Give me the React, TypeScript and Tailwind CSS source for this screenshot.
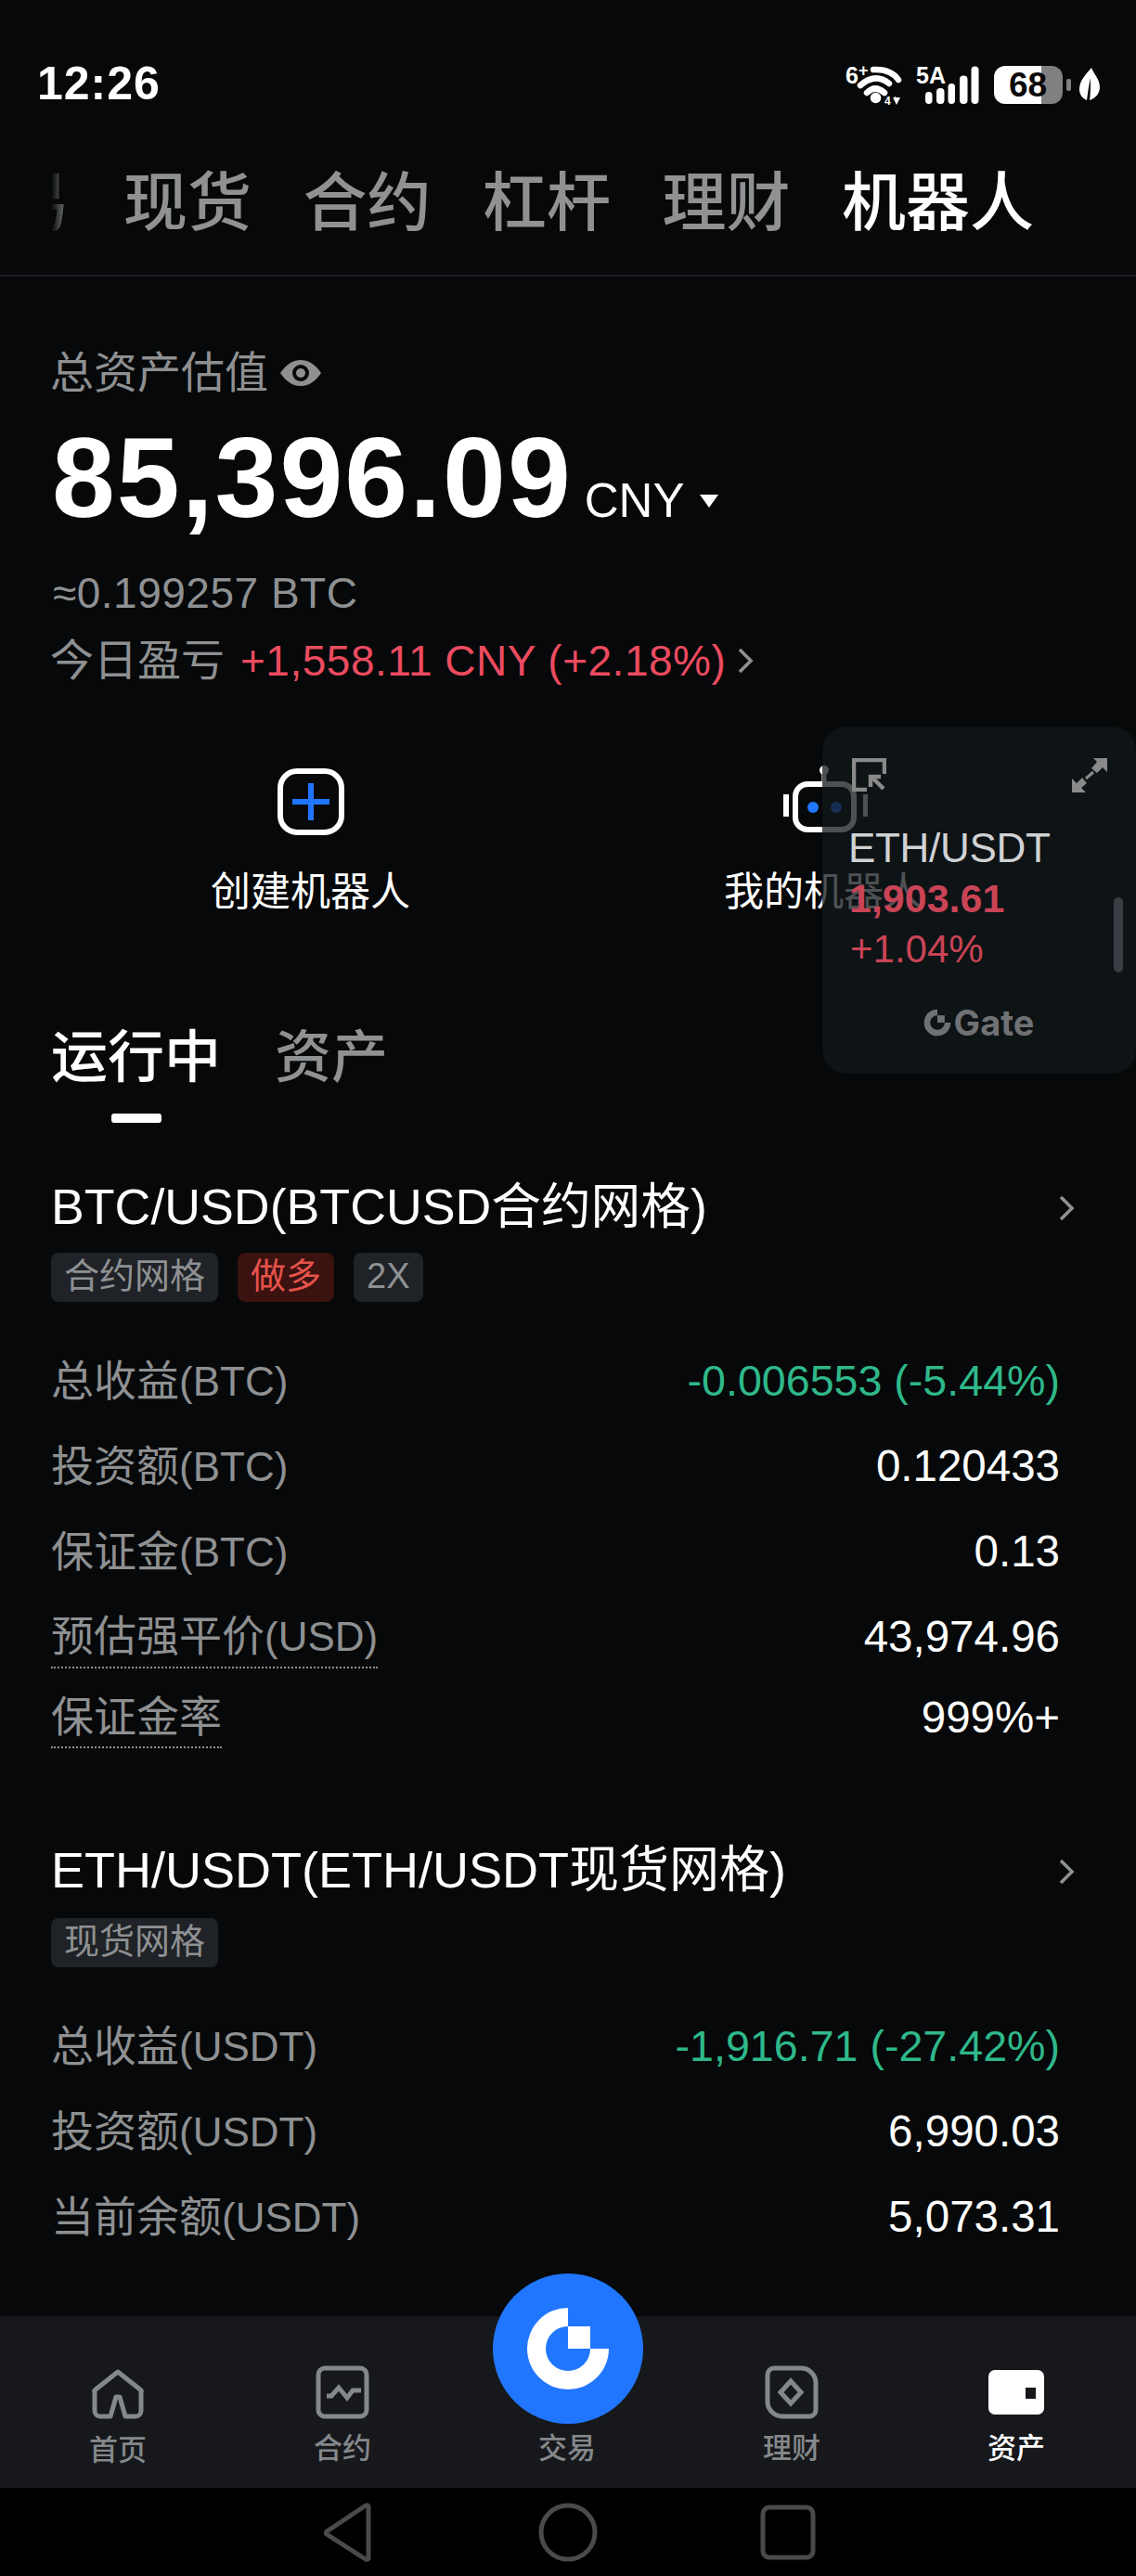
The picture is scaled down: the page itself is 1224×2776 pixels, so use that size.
import React from "react";

const SANS = "font-['Liberation_Sans','Noto_Sans_CJK_SC',sans-serif]";

function StatusIcons() {
  return (
    <svg width="278" height="46" viewBox="0 0 278 46" className="block overflow-visible">
      <g fill="#fff" fontFamily="'Liberation Sans',sans-serif" fontWeight="700">
        <text x="1" y="23" fontSize="25">6</text>
        <text x="15" y="15" fontSize="18">+</text>
        <text x="77" y="23" fontSize="25">5A</text>
        <text x="43" y="46" fontSize="12">4</text>
      </g>
      <g fill="none" stroke="#fff" strokeWidth="6.5" strokeLinecap="round">
        <path d="M31 8 Q 50 7 58 19" />
        <path d="M17 25 Q 33 11 48 23" />
        <path d="M24 33 Q 33 24 43 33" />
      </g>
      <circle cx="33.5" cy="38.5" r="5.8" fill="#fff" />
      <path d="M52 38h2v-1h1v1h5l-4 8z" fill="#fff" />
      <g fill="#fff">
        <rect x="87" y="32" width="7.5" height="13" rx="3.7" />
        <rect x="99" y="28" width="8.5" height="17" rx="4" />
        <rect x="111.5" y="23" width="7.5" height="22" rx="3.7" />
        <rect x="124" y="14.5" width="8.5" height="30.5" rx="4" />
        <rect x="136.5" y="4.5" width="8" height="40.5" rx="4" />
      </g>
      <path d="M212 4h-39a12 12 0 0 0-12 12v17a12 12 0 0 0 12 12h39z" fill="#fff" />
      <path d="M212 4h11a12 12 0 0 1 12 12v17a12 12 0 0 1-12 12h-11z" fill="#808080" />
      <text x="177" y="36.5" fontSize="37" fontWeight="700" fontFamily="'Liberation Sans',sans-serif" fill="#0a0a0a">68</text>
      <rect x="239" y="18" width="5" height="13" rx="2" fill="#808080" />
      <path d="M266 6C260 13 253 20 253 29c0 7 4 10 8 12 1-7 2-16 4-24 0 9 0 18-1 24 6-2 11-7 11-14 0-9-7-15-9-21z" fill="#fff" />
    </svg>
  );
}

function Tab({ children, active }: { children: React.ReactNode; active?: boolean }) {
  return (
    <span className={`text-[69px] leading-[80px] font-medium ${active ? "text-white" : "text-[#8f9193]"}`}>{children}</span>
  );
}

function Chevron({ className }: { className: string }) {
  return (
    <svg width="20" height="30" viewBox="0 0 20 30" className={className} fill="none" stroke="currentColor" strokeWidth="3.6">
      <path d="M3 3l12 12L3 27" />
    </svg>
  );
}

function Row({ label, unit, value, green, dotted, h = "h-[92px]" }: { label: string; unit?: string; value: string; green?: boolean; dotted?: boolean; h?: string }) {
  return (
    <div className={`flex items-center justify-between ${h}`}>
      <span className={`text-[46px] leading-[64px] text-[#8e9092] ${dotted ? "border-b-2 border-dotted border-[#8e9092]" : ""}`}>
        {label}
        {unit && <span className="text-[44px]">{unit}</span>}
      </span>
      <span className={`leading-[64px] ${green ? "text-[46.6px] text-[#2fb88a]" : "text-[47.5px] text-white"}`}>{value}</span>
    </div>
  );
}

function Tag({ children, red }: { children: React.ReactNode; red?: boolean }) {
  return (
    <span className={`h-[53px] px-[14px] pb-[3px] rounded-[8px] flex items-center text-[38px] leading-none ${red ? "bg-[#3a1210] text-[#e5534b]" : "bg-[#1f2226] text-[#8e9092]"}`}>
      {children}
    </span>
  );
}

function GateG({ size, color }: { size: number; color: string }) {
  return (
    <svg width={size} height={size} viewBox="-46 -46 92 92" className="block">
      <path d="M0-44A44 44 0 1 0 44 0H24A24 24 0 1 1 0-24Z" fill={color} />
      <rect x="0" y="-24" width="24" height="24" fill={color} />
    </svg>
  );
}

function NavItem({ icon, label, active, labelClass = "" }: { icon: React.ReactNode; label: string; active?: boolean; labelClass?: string }) {
  return (
    <div className="flex flex-col items-center">
      <div className="h-[60px] flex items-center justify-center">{icon}</div>
      <span className={`text-[31px] leading-[36px] font-medium mt-[13px] ${active ? "text-white" : "text-[#85888b]"} ${labelClass}`}>{label}</span>
    </div>
  );
}

export default function App() {
  return (
    <div className={`relative w-[1224px] h-[2776px] overflow-hidden bg-[#060809] ${SANS}`}>
      <header className="h-[298px] pt-[60px] border-b-2 border-[#1b1d20]">
        <div className="h-[60px] flex items-center justify-between pl-[40px] pr-[36px]">
          <span className="text-[50px] leading-[60px] font-bold text-white tracking-[1px]">12:26</span>
          <StatusIcons />
        </div>
        <div className="flex items-center mt-[60px] pl-[55px] gap-[58px]">
          <span className="w-[20px] overflow-hidden [mask-image:linear-gradient(to_right,transparent,black)]">
            <span className="block ml-[-49px] w-[69px] text-[69px] leading-[80px] font-medium text-[#8f9193]">易</span>
          </span>
          <div className="flex gap-[55.5px]">
            <Tab>现货</Tab>
            <Tab>合约</Tab>
            <Tab>杠杆</Tab>
            <Tab>理财</Tab>
            <Tab active>机器人</Tab>
          </div>
        </div>
      </header>

      <section className="pl-[54px]">
        <div className="flex items-center mt-[74px] h-[60px]">
          <span className="text-[47px] leading-[60px] text-[#8e9092]">总资产估值</span>
          <svg width="46" height="32" viewBox="0 0 46 32" className="ml-[12px]">
            <path d="M1 16C8 6 15 2 23 2s15 4 22 14c-7 10-14 14-22 14S8 26 1 16z" fill="#8e9092" />
            <circle cx="23" cy="16" r="9" fill="#060809" />
            <circle cx="23" cy="16" r="5" fill="#8e9092" />
          </svg>
        </div>
        <div className="flex items-baseline mt-[18px] h-[130px]">
          <span className="text-[122px] leading-[130px] font-bold text-white ml-[2px] tracking-[2px]">85,396.09</span>
          <span className="text-[51px] text-white ml-[13px]">CNY</span>
          <svg width="20" height="14" viewBox="0 0 20 14" className="ml-[17px] self-center mt-[50px]">
            <path d="M0 0h20L10 14z" fill="#fff" />
          </svg>
        </div>
        <div className="mt-[34px] text-[46px] leading-[50px] text-[#8e9092] ml-[3px] tracking-[0.5px]">≈0.199257 BTC</div>
        <div className="flex items-center mt-[23px] h-[50px]">
          <span className="text-[47px] leading-[50px] text-[#8e9092]">今日盈亏</span>
          <span className="text-[46px] leading-[50px] text-[#ec4b60] ml-[17px] tracking-[0.5px]">+1,558.11 CNY (+2.18%)</span>
          <Chevron className="ml-[12px] text-[#8e9092]" />
        </div>
      </section>

      <section className="grid grid-cols-2 pl-[58px] pr-[60px] mt-[91px]">
        <div className="flex flex-col items-center">
          <svg width="72" height="72" viewBox="0 0 72 72" fill="none" className="block">
            <rect x="3" y="3" width="66" height="66" rx="18" stroke="#fff" strokeWidth="6" />
            <path d="M36 16v40M16 36h40" stroke="#2176ff" strokeWidth="6" />
          </svg>
          <span className="text-[43px] leading-[50px] text-white mt-[36px]">创建机器人</span>
        </div>
        <div className="flex flex-col items-center">
          <svg width="92" height="72" viewBox="0 0 92 72" fill="none" className="block overflow-visible">
            <rect x="15" y="17" width="63" height="49" rx="13" stroke="#fff" strokeWidth="6" />
            <rect x="2" y="28" width="6" height="24" fill="#fff" />
            <rect x="88" y="28" width="5" height="24" fill="#fff" />
            <path d="M46 3v12" stroke="#fff" strokeWidth="5" />
            <circle cx="46" cy="2" r="5" fill="#fff" />
            <circle cx="34" cy="42" r="6" fill="#2176ff" />
            <circle cx="59" cy="42" r="6" fill="#2176ff" />
          </svg>
          <span className="text-[43px] leading-[50px] text-white mt-[36px]">我的机器人</span>
        </div>
      </section>

      <section className="pl-[55px] mt-[119px]">
        <div className="flex gap-[58px]">
          <span className="text-[61px] leading-[70px] font-medium text-white">运行中</span>
          <span className="text-[61px] leading-[70px] font-medium text-[#8f9193]">资产</span>
        </div>
        <div className="w-[54px] h-[10px] rounded-[3px] bg-white ml-[65px] mt-[25px]" />
      </section>

      <section className="pl-[55px] pr-[82px] mt-[60px]">
        <div className="flex items-center justify-between h-[60px] mr-[-28px]">
          <span className="text-[53.7px] leading-[60px] text-white">BTC/USD(BTCUSD合约网格)</span>
          <Chevron className="text-[#8e9092] mr-[10px] mt-[4px]" />
        </div>
        <div className="flex gap-[21px] mt-[20px]">
          <Tag>合约网格</Tag>
          <Tag red>做多</Tag>
          <Tag>2X</Tag>
        </div>
        <div className="flex flex-col mt-[39px]">
          <Row label="总收益" unit="(BTC)" value="-0.006553 (-5.44%)" green />
          <Row label="投资额" unit="(BTC)" value="0.120433" />
          <Row label="保证金" unit="(BTC)" value="0.13" />
          <Row label="预估强平价" unit="(USD)" value="43,974.96" dotted />
          <Row label="保证金率" value="999%+" dotted h="h-[82px]" />
        </div>
      </section>

      <section className="pl-[55px] pr-[82px] mt-[93px]">
        <div className="flex items-center justify-between h-[60px] mr-[-28px]">
          <span className="text-[54px] leading-[60px] text-white">ETH/USDT(ETH/USDT现货网格)</span>
          <Chevron className="text-[#8e9092] mr-[10px] mt-[4px]" />
        </div>
        <div className="flex gap-[21px] mt-[22px]">
          <Tag>现货网格</Tag>
        </div>
        <div className="flex flex-col mt-[39px]">
          <Row label="总收益" unit="(USDT)" value="-1,916.71 (-27.42%)" green />
          <Row label="投资额" unit="(USDT)" value="6,990.03" />
          <Row label="当前余额" unit="(USDT)" value="5,073.31" />
        </div>
      </section>

      <nav className="relative mt-[61px] h-[185px] bg-[#16181b] grid grid-cols-5 pl-[6px] pr-[8px] pt-[52px]">
        <NavItem
          label="首页"
          labelClass="translate-y-[2px]"
          icon={
            <svg width="56" height="54" viewBox="0 0 56 54" fill="none" className="translate-y-[2px]">
              <path d="M28 3L52 22a2 2 0 0 1 1 3v20a6 6 0 0 1-6 6H36L30 30h-4L20 51H9a6 6 0 0 1-6-6V25a2 2 0 0 1 1-3z" stroke="#85888b" strokeWidth="5" strokeLinejoin="round" />
            </svg>
          }
        />
        <NavItem
          label="合约"
          icon={
            <svg width="58" height="58" viewBox="0 0 58 58" fill="none">
              <rect x="3" y="3" width="52" height="52" rx="7" stroke="#85888b" strokeWidth="5" />
              <path d="M12 33h5l8-9 9 11 6-8h9" stroke="#85888b" strokeWidth="5" />
            </svg>
          }
        />
        <NavItem label="交易" icon={<span className="block w-[56px] h-[56px]" />} />
        <NavItem
          label="理财"
          icon={
            <svg width="58" height="58" viewBox="0 0 58 58" fill="none">
              <path d="M10 3h29a16 16 0 0 1 16 16v29a7 7 0 0 1-7 7H19A16 16 0 0 1 3 39V10a7 7 0 0 1 7-7z" stroke="#85888b" strokeWidth="5" />
              <path d="M28 17l11 12-11 12-11-12z" stroke="#85888b" strokeWidth="5" />
            </svg>
          }
        />
        <NavItem
          label="资产"
          active
          icon={
            <svg width="60" height="48" viewBox="0 0 60 48">
              <path d="M7 0h46a7 7 0 0 1 7 7v34a7 7 0 0 1-7 7H7a7 7 0 0 1-7-7V7a7 7 0 0 1 7-7zM40 19v12h11V19z" fill="#fff" fillRule="evenodd" />
            </svg>
          }
        />
        <div className="absolute left-[531px] top-[-46px] w-[162px] h-[162px] rounded-full bg-[#2176ff] flex items-center justify-center">
          <GateG size={92} color="#fff" />
        </div>
      </nav>

      <div className="h-[95px] bg-black flex items-center pl-[347px]">
        <svg width="56" height="66" viewBox="0 0 56 66" fill="none" stroke="#4a4a4a" strokeWidth="5" strokeLinejoin="round">
          <path d="M50 5a2 2 0 0 0-3-1L5 32a2 2 0 0 0 0 3l42 27a2 2 0 0 0 3-1z" />
        </svg>
        <svg width="64" height="64" viewBox="0 0 64 64" fill="none" stroke="#4a4a4a" strokeWidth="5" className="ml-[177px]">
          <circle cx="32" cy="32" r="29" />
        </svg>
        <svg width="60" height="60" viewBox="0 0 60 60" fill="none" stroke="#4a4a4a" strokeWidth="5" className="ml-[175px]">
          <rect x="3" y="3" width="54" height="54" rx="7" />
        </svg>
      </div>

      <aside className="absolute left-[886px] top-[783px] w-[338px] h-[374px] rounded-[26px] bg-[#12171a]/75">
        <div className="flex justify-between pl-[32px] pr-[31px] pt-[34px]">
          <svg width="37" height="36" viewBox="0 0 37 36" fill="none" stroke="#8a8a8a" strokeWidth="4.5">
            <path d="M16 34H2V2h33v15" />
            <path d="M21 20l13 13M20 31V20h11" />
          </svg>
          <svg width="38" height="37" viewBox="0 0 38 37">
            <path d="M23 0h15v15l-5-5-6 6-6-5 6-7zM15 37H0V22l5 5 6-6 5 6-6 5z" fill="#8a8a8a" />
            <path d="M15 22l8-7" stroke="#8a8a8a" strokeWidth="3" />
          </svg>
        </div>
        <div className="pl-[28px] mt-[35px] text-[44px] leading-[50px] text-[#d0d2d3] tracking-[-0.3px]">ETH/USDT</div>
        <div className="pl-[29px] mt-[4px] text-[43px] leading-[50px] font-bold text-[#c94456]">1,903.61</div>
        <div className="pl-[30px] mt-[5px] text-[42px] leading-[50px] text-[#c94456]">+1.04%</div>
        <div className="flex items-center justify-center gap-[3px] mt-[36px] ml-[-1px]">
          <GateG size={30} color="#6f7174" />
          <span className="text-[38px] leading-[36px] font-bold text-[#6f7174] font-['Inter','Liberation_Sans',sans-serif]">Gate</span>
        </div>
        <div className="absolute left-[314px] top-[184px] w-[10px] h-[81px] rounded-full bg-[#3a3e44]" />
      </aside>
    </div>
  );
}
